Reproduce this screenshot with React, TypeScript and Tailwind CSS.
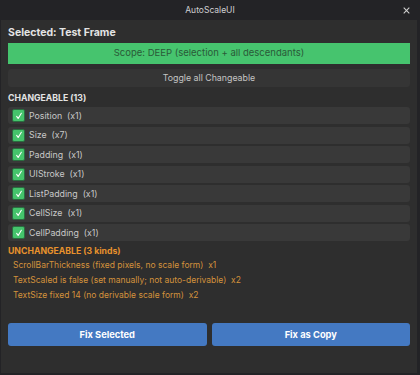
// AutoScaleUI plugin widget: scope bar, changeable checklist, unchangeable notes, fix actions.
const changeable = [
  { name: 'Position', count: 1 },
  { name: 'Size', count: 7 },
  { name: 'Padding', count: 1 },
  { name: 'UIStroke', count: 1 },
  { name: 'ListPadding', count: 1 },
  { name: 'CellSize', count: 1 },
  { name: 'CellPadding', count: 1 },
];

const unchangeable = [
  'ScrollBarThickness (fixed pixels, no scale form)  x1',
  'TextScaled is false (set manually; not auto-derivable)  x2',
  'TextSize fixed 14 (no derivable scale form)  x2',
];

const Check = () => (
  <span className="flex h-[13px] w-[13px] shrink-0 items-center justify-center rounded-[2px] border border-[#2a6e40] bg-[#45c46c]">
    <svg viewBox="0 0 12 12" className="h-[10px] w-[10px]" fill="none" stroke="#ffffff" strokeWidth="1.3" strokeLinecap="round" strokeLinejoin="round">
      <path d="M3.2 6.4 L5 9 L8.8 2.8" />
    </svg>
  </span>
);

export default function App() {
  return (
    <div className="flex h-[375px] w-[420px] flex-col bg-[#232326] font-['Inter',sans-serif]">
      {/* Title bar */}
      <div className="relative flex h-[20px] shrink-0 items-center justify-center">
        <span className="text-[8.5px] text-[#cfcfd2]">AutoScaleUI</span>
        <svg viewBox="0 0 10 10" className="absolute right-[10px] top-[7px] h-[7px] w-[7px]" stroke="#d0d0d0" strokeWidth="1.5">
          <path d="M1 1 L9 9 M9 1 L1 9" />
        </svg>
      </div>

      {/* Body */}
      <div className="ml-[1px] mr-[3px] mb-[2px] flex flex-1 flex-col bg-[#2e2e2e] px-[7px] pt-[6px]">
        <div className="text-[10.5px] font-bold leading-[14px] text-[#e4e4e4]">Selected: Test Frame</div>

        <div className="mt-[3px] flex h-[21px] items-center justify-center bg-[#46c46e] text-[9.5px] text-[#2a5a38]">
          Scope: DEEP (selection + all descendants)
        </div>

        <div className="mt-[5px] flex h-[18px] items-center justify-center rounded-[3px] bg-[#353535] text-[8.8px] text-[#c4c4c4]">
          Toggle all Changeable
        </div>

        <div className="mt-[5px] text-[8.7px] font-bold leading-[13px] text-[#e4e4e4]">CHANGEABLE (13)</div>

        <div className="mt-[2px] flex flex-col gap-[2.5px]">
          {changeable.map((c) => (
            <div key={c.name} className="flex h-[17px] items-center gap-[4px] rounded-[3px] bg-[#393939] pl-[4px]">
              <Check />
              <span className="whitespace-pre text-[8.8px] text-[#c8c8c8]">
                {c.name}  (x{c.count})
              </span>
            </div>
          ))}
        </div>

        <div className="mt-[4px] text-[8.7px] font-bold leading-[13px] text-[#e8922c]">UNCHANGEABLE (3 kinds)</div>

        <div className="flex flex-col pl-[5px]">
          {unchangeable.map((u) => (
            <div key={u} className="h-[15px] whitespace-pre text-[8.5px] leading-[15px] text-[#d4923c]">
              {u}
            </div>
          ))}
        </div>

        <div className="mt-[20px] flex gap-[5px]">
          <button type="button" className="h-[23px] flex-1 rounded-[3px] bg-[#4479c2] text-[9.3px] font-bold text-white">
            Fix Selected
          </button>
          <button type="button" className="h-[23px] flex-1 rounded-[3px] bg-[#4479c2] text-[9.3px] font-bold text-white">
            Fix as Copy
          </button>
        </div>
      </div>
    </div>
  );
}
